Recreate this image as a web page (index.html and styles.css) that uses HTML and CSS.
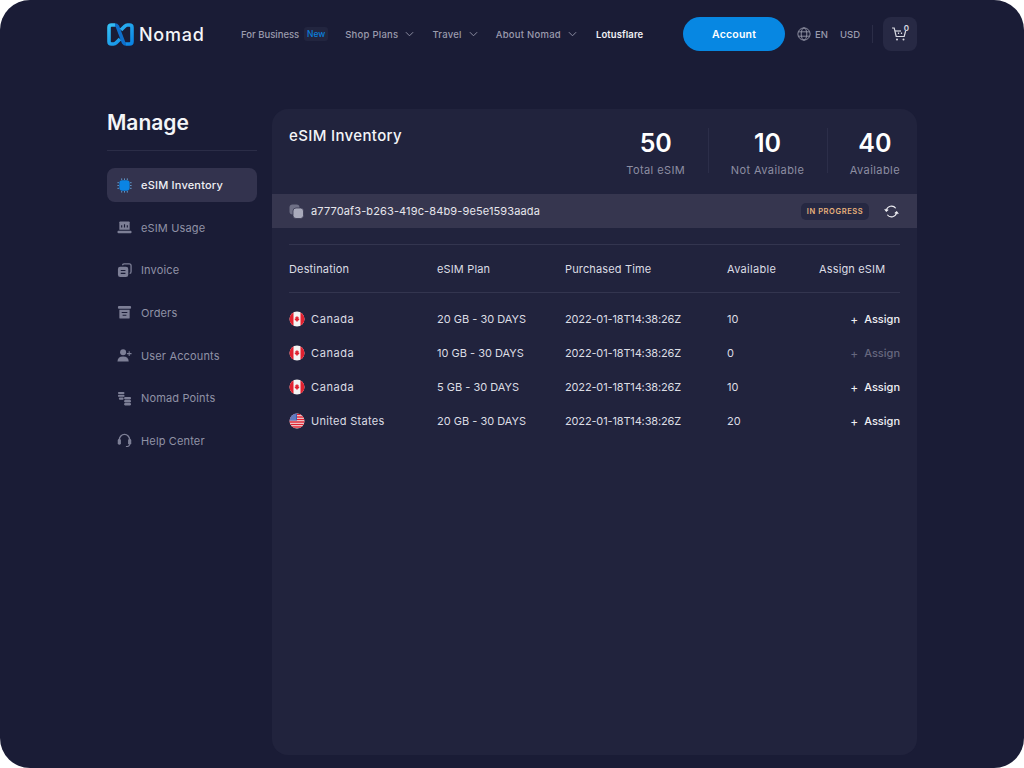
FILE: index.html
```html
<!DOCTYPE html>
<html lang="en">
<head>
<meta charset="utf-8">
<title>Nomad - eSIM Inventory</title>
<link rel="stylesheet" href="styles.css">
</head>
<body>
<svg class="defs" width="0" height="0" aria-hidden="true">
  <defs>
    <linearGradient id="lg" x1="0" y1="0" x2="1" y2="1"><stop offset="0" stop-color="#35c0f5"/><stop offset="1" stop-color="#0a84e4"/></linearGradient>
    <clipPath id="cc"><circle cx="8" cy="8" r="7.5"/></clipPath>
    <symbol id="ca" viewBox="0 0 16 16">
      <g clip-path="url(#cc)"><rect width="16" height="16" fill="#f4f4f4"/><rect width="4.5" height="16" fill="#e0202f"/><rect x="11.5" width="4.5" height="16" fill="#e0202f"/><path d="M8 4.8l.8 1.4.9-.4-.3 2 .9-.2-.3.9.6.3L8.4 10v1h-.8v-1L5.400 8.800l.6-.3-.3-.9.900.2-.3-2 .9.4z" fill="#e0202f"/></g>
    </symbol>
    <symbol id="us" viewBox="0 0 16 16">
      <g clip-path="url(#cc)"><rect width="16" height="16" fill="#f4f4f4"/><path d="M0 1.500h16M0 4h16M0 6.500h16M0 9h16M0 11.500h16M0 14h16" stroke="#e0202f" stroke-width="1.300"/><rect width="8" height="7.500" fill="#3b5bb0"/><path d="M2 2h.01M4 2h.01M6 2h.01M2 4h.01M4 4h.01M6 4h.01M2 6h.01M4 6h.01M6 6h.01" stroke="#fff" stroke-width="1" stroke-linecap="round"/></g>
    </symbol>
    <symbol id="chev" viewBox="0 0 10 6"><path d="M1 1l4 4 4-4" fill="none" stroke="currentColor" stroke-width="1.100"/></symbol>
  </defs>
</svg>
<div class="frame">
  <header class="top">
    <a class="brand">
      <svg class="logo" viewBox="0 0 27 23">
        <path d="M8 2Q9.500 2 10.500 3.500L16.500 19.500Q17.500 21 19 21" fill="none" stroke="#0e6fcb" stroke-width="3.600"/>
        <path d="M8 2H4.500Q2 2 2 4.500V18.500Q2 21 4.500 21H6.500Q8 21 9.200 19.800L13 16M19 21H22.500Q25 21 25 18.500V4.500Q25 2 22.500 2H20.500Q19 2 17.800 3.200L14 7" fill="none" stroke="url(#lg)" stroke-width="3.600"/>
      </svg>
      <span class="wordmark">Nomad</span>
    </a>
    <nav class="nav">
      <span class="nav-item nav-biz">For Business<span class="badge">New</span></span>
      <span class="nav-item">Shop Plans<svg class="chev"><use href="#chev"/></svg></span>
      <span class="nav-item">Travel<svg class="chev"><use href="#chev"/></svg></span>
      <span class="nav-item">About Nomad<svg class="chev"><use href="#chev"/></svg></span>
      <span class="nav-item nav-strong">Lotusflare</span>
    </nav>
    <div class="actions">
      <button class="account">Account</button>
      <span class="lang">
        <svg class="globe" viewBox="0 0 16 16" fill="none" stroke="currentColor" stroke-width="1"><circle cx="8" cy="8" r="7"/><ellipse cx="8" cy="8" rx="3.200" ry="7"/><path d="M1.500 5.500h13M1.500 10.500h13"/></svg>EN
      </span>
      <span class="currency">USD</span>
      <span class="vline"></span>
      <span class="cart">
        <svg viewBox="0 0 18 18" width="18" height="18" fill="none" stroke="#d9dae2" stroke-width="1.200"><path d="M1 3h2.200l2 8.500h8l1.400-5.500"/><path d="M4 6h6" /><circle cx="6" cy="14.500" r="1" fill="#d9dae2" stroke="none"/><circle cx="12.500" cy="14.500" r="1" fill="#d9dae2" stroke="none"/><path d="M7.500 7.500v1.500M10.500 7.500v1.500"/></svg>
        <span class="cart-count">0</span>
      </span>
    </div>
  </header>
  <div class="body">
    <aside class="side">
      <h1 class="side-title">Manage</h1>
      <ul class="menu">
        <li class="menu-item active">
          <svg class="mi" viewBox="0 0 16 16"><rect x="2.500" y="2.500" width="11" height="11" rx="3" fill="#0a84e4"/><path d="M5 .5v1.500M8 .5v1.500M11 .5v1.500M5 14v1.500M8 14v1.500M11 14v1.500M.5 5H2M.5 8H2M.5 11H2M14 5h1.500M14 8h1.500M14 11h1.500" stroke="#6fb6ee" stroke-width=".9"/></svg>
          eSIM Inventory</li>
        <li class="menu-item">
          <svg class="mi" viewBox="0 0 16 16"><path d="M2.500 2.500Q2.500 1.500 3.500 1.500h9Q13.500 1.500 13.500 2.500V10.500h-11z" fill="#7d7f96"/><rect x=".5" y="11.500" width="15" height="2.500" rx="1" fill="#7d7f96"/><path d="M5 8V5.500M8 8V4.500M11 8V5.500" stroke="#1a1c36" stroke-width="1.200"/></svg>
          eSIM Usage</li>
        <li class="menu-item">
          <svg class="mi" viewBox="0 0 16 16"><path d="M6 2.500Q6 1 7.500 1H13Q15 1 15 3V9Q15 11 13.500 11" fill="none" stroke="#7d7f96" stroke-width="1.400"/><rect x="1" y="4" width="11" height="11" rx="2.500" fill="#7d7f96"/><path d="M4 8h5M4 11h5" stroke="#1a1c36" stroke-width="1.200"/></svg>
          Invoice</li>
        <li class="menu-item">
          <svg class="mi" viewBox="0 0 16 16"><rect x="1" y="1" width="14" height="3" rx="1" fill="#7d7f96"/><path d="M2.500 5h11v8.500q0 1-1 1h-9q-1 0-1-1z" fill="#7d7f96"/><path d="M5 8h6M6 11h4" stroke="#1a1c36" stroke-width="1.100"/></svg>
          Orders</li>
        <li class="menu-item">
          <svg class="mi" viewBox="0 0 16 16" fill="#7d7f96"><circle cx="6.500" cy="4.500" r="3.200"/><path d="M.5 14.500q0-5.500 6-5.500t6 5.500z"/><path d="M13 3.500v5M10.500 6h5" stroke="#7d7f96" stroke-width="1.100"/></svg>
          User Accounts</li>
        <li class="menu-item">
          <svg class="mi" viewBox="0 0 16 16" fill="#7d7f96"><rect x="1" y="1" width="7" height="2.200" rx="1"/><rect x="1" y="4" width="7" height="2.200" rx="1"/><rect x="2" y="7" width="5" height="2.200" rx="1"/><rect x="7.500" y="6.500" width="7.500" height="2.500" rx="1.200"/><rect x="7.500" y="9.700" width="7.500" height="2.500" rx="1.200"/><rect x="7.500" y="12.900" width="7.500" height="2.500" rx="1.200"/></svg>
          Nomad Points</li>
        <li class="menu-item">
          <svg class="mi" viewBox="0 0 16 16"><path d="M2.500 9V7a5.500 5.500 0 0 1 11 0v2" fill="none" stroke="#7d7f96" stroke-width="1.500"/><rect x=".8" y="6.500" width="3.400" height="6" rx="1.500" fill="#7d7f96"/><rect x="11.800" y="6.500" width="3.400" height="6" rx="1.500" fill="#7d7f96"/><path d="M13.500 12q0 2.500-4 2.500" fill="none" stroke="#7d7f96" stroke-width="1.100"/></svg>
          Help Center</li>
      </ul>
    </aside>
    <main class="card">
      <section class="head">
        <h2 class="card-title">eSIM Inventory</h2>
        <div class="stats">
          <div class="stat"><div class="num">50</div><div class="lbl">Total eSIM</div></div>
          <div class="stat"><div class="num">10</div><div class="lbl">Not Available</div></div>
          <div class="stat"><div class="num">40</div><div class="lbl">Available</div></div>
        </div>
      </section>
      <section class="band">
        <svg class="copy" viewBox="0 0 15 15"><rect x=".5" y=".5" width="10" height="10" rx="3" fill="#6f7086"/><rect x="4" y="4" width="10.500" height="10.500" rx="3" fill="#a9aabb" stroke="#36364f" stroke-width=".8"/></svg>
        <span class="uuid">a7770af3-b263-419c-84b9-9e5e1593aada</span>
        <span class="status">IN PROGRESS</span>
        <svg class="sync" viewBox="0 0 16 16" fill="none" stroke="#f0f0f4" stroke-width="1.200"><path d="M2.500 7a5.600 5.600 0 0 1 10-2.500M13.500 9a5.600 5.600 0 0 1-10 2.500"/><path d="M.8 5.500L2.500 7.600 4.500 6M15.200 10.500L13.500 8.400 11.500 10"/></svg>
      </section>
      <section class="table">
        <div class="row row-head">
          <span>Destination</span><span>eSIM Plan</span><span>Purchased Time</span><span class="avail">Available</span><span>Assign eSIM</span>
        </div>
        <div class="rows">
          <div class="row">
            <span class="dest"><svg class="flag"><use href="#ca"/></svg>Canada</span><span class="plan">20 GB - 30 DAYS</span><span class="date">2022-01-18T14:38:26Z</span><span>10</span><span class="assign"><b class="plus">+</b>Assign</span>
          </div>
          <div class="row">
            <span class="dest"><svg class="flag"><use href="#ca"/></svg>Canada</span><span class="plan">10 GB - 30 DAYS</span><span class="date">2022-01-18T14:38:26Z</span><span>0</span><span class="assign off"><b class="plus">+</b>Assign</span>
          </div>
          <div class="row">
            <span class="dest"><svg class="flag"><use href="#ca"/></svg>Canada</span><span class="plan">5 GB - 30 DAYS</span><span class="date">2022-01-18T14:38:26Z</span><span>10</span><span class="assign"><b class="plus">+</b>Assign</span>
          </div>
          <div class="row">
            <span class="dest wide"><svg class="flag"><use href="#us"/></svg>United States</span><span class="plan">20 GB - 30 DAYS</span><span class="date">2022-01-18T14:38:26Z</span><span>20</span><span class="assign"><b class="plus">+</b>Assign</span>
          </div>
        </div>
      </section>
    </main>
  </div>
</div>
</body>
</html>
```

FILE: styles.css
```css
* { box-sizing: border-box; }
html, body { margin: 0; padding: 0; background: #fff; }
body { width: 1024px; height: 768px; overflow: hidden; font-family: "Inter", "Noto Sans", sans-serif; }
.defs { display: block; height: 0; }
.frame { width: 1024px; height: 768px; background: #1a1c36; border-radius: 30px; padding: 0 107px; display: flex; flex-direction: column; }

.top { height: 68px; display: flex; align-items: center; }
.brand { display: flex; align-items: center; width: 134px; }
.logo { width: 27px; height: 23px; flex: none; }
.wordmark { margin-left: 5px; font-size: 18px; font-weight: 500; color: #f4f5f8; letter-spacing: .75px; }
.nav { display: flex; align-items: center; gap: 18px; font-size: 9.500px; color: #9a9bad; letter-spacing: .25px; }
.nav-item { display: flex; align-items: center; font-weight: 500; }
.nav-biz { letter-spacing: 0; margin-right: -1px; }
.nav-strong { color: #f0f0f4; font-weight: 600; margin-left: 1px; letter-spacing: .1px; }
.badge { margin-left: 5px; width: 24px; height: 14px; border-radius: 3px; background: #22253f; color: #0a7fdc; font-size: 8.500px; display: flex; align-items: center; justify-content: center; }
.chev { width: 9px; height: 6px; margin-left: 7px; color: #8d8ea2; }
.actions { margin-left: auto; display: flex; align-items: center; }
.account { width: 102px; height: 34px; border: 0; border-radius: 17px; background: #0787e2; color: #fff; font: 600 10.500px "Inter", sans-serif; letter-spacing: .2px; }
.lang { display: flex; align-items: center; margin-left: 12px; font-size: 9.500px; font-weight: 500; color: #9a9bad; }
.globe { width: 14px; height: 14px; margin-right: 4px; color: #9a9bad; }
.currency { margin-left: 12px; font-size: 9.500px; font-weight: 500; color: #9a9bad; }
.vline { width: 1px; height: 18px; margin-left: 12px; background: #2b2d47; }
.cart { position: relative; width: 34px; height: 34px; margin-left: 10px; border-radius: 8px; background: #272944; display: flex; align-items: center; justify-content: center; }
.cart-count { position: absolute; top: 6px; right: 8px; font-size: 8px; font-weight: 600; color: #d9dae2; }

.body { display: flex; gap: 15px; padding-top: 41px; flex: 1; padding-bottom: 13px; }
.side { width: 150px; flex: none; }
.side-title { margin: 0; height: 42px; padding-top: 1px; font-size: 21px; line-height: 26px; font-weight: 600; color: #f4f5f8; border-bottom: 1px solid #2b2d47; }
.menu { list-style: none; margin: 17px 0 0; padding: 0; display: flex; flex-direction: column; gap: 8.670px; }
.menu-item { height: 34px; display: flex; align-items: center; padding-left: 10px; border-radius: 8px; font-size: 11px; font-weight: 400; color: #9092a6; letter-spacing: .15px; }
.menu-item.active { background: #33334e; color: #f0f0f4; font-weight: 500; letter-spacing: .2px; }
.mi { width: 15px; height: 15px; margin-right: 9px; flex: none; }

.card { flex: 1; min-width: 0; background: #21233d; border-radius: 16px; display: flex; flex-direction: column; }
.head { height: 85px; padding: 0 17px; display: flex; justify-content: space-between; }
.card-title { margin: 18px 0 0; font-size: 15px; line-height: 18px; font-weight: 500; color: #f4f5f8; letter-spacing: .35px; }
.stats { display: flex; padding-top: 19px; height: 64px; box-sizing: content-box; }
.stat { padding: 0 23px 0 21.500px; border-left: 1px solid #2c2e49; height: 45px; text-align: center; }
.stat:first-child { border-left: 0; }
.stat:last-child { padding-right: 0; }
.num { font-size: 25px; line-height: 30px; font-weight: 600; color: #fff; }
.lbl { margin-top: 5px; font-size: 11px; line-height: 15px; color: #8d8ea2; font-weight: 400; letter-spacing: .42px; }

.band { height: 34px; background: #36364f; padding: 0 17px; display: flex; align-items: center; }
.copy { width: 15px; height: 15px; margin-right: 7px; flex: none; }
.uuid { font-size: 11px; font-weight: 400; color: #e6e6ec; letter-spacing: .13px; }
.status { margin-left: auto; width: 68px; height: 17px; border-radius: 5px; background: #262842; color: #e9b27c; font-size: 7.500px; font-weight: 600; letter-spacing: .6px; display: flex; align-items: center; justify-content: center; }
.sync { width: 15px; height: 15px; margin-left: 15px; margin-right: 1px; }

.table { margin: 16px 17px 0; border-top: 1px solid #33354f; }
.row { display: grid; grid-template-columns: 148px 128px 162px 92px minmax(0, 1fr); align-items: center; height: 34px; font-size: 11px; font-weight: 400; color: #dcdde4; letter-spacing: .15px; white-space: nowrap; }
.row-head { height: 48px; border-bottom: 1px solid #33354f; }
.rows { padding-top: 9px; }
.avail { letter-spacing: .3px; }
.plan { letter-spacing: 0; }
.date { letter-spacing: -.15px; }
.dest { display: flex; align-items: center; letter-spacing: .6px; }
.dest.wide { letter-spacing: .3px; }
.flag { width: 16px; height: 16px; margin-right: 6px; }
.assign { justify-self: end; display: flex; align-items: center; color: #f0f0f4; font-weight: 500; letter-spacing: 0; }
.assign.off { color: #66677f; }
.plus { font-weight: 400; font-size: 12px; margin-right: 6px; }
```
